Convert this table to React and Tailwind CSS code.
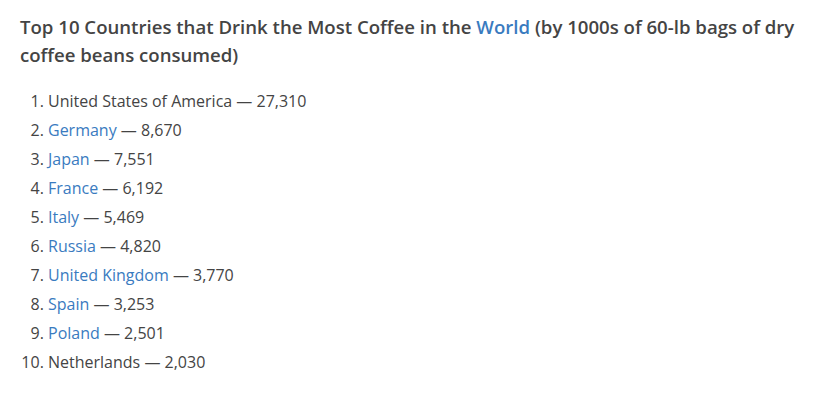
const countries = [
  { name: 'United States of America', value: '27,310', link: false },
  { name: 'Germany', value: '8,670', link: true },
  { name: 'Japan', value: '7,551', link: true },
  { name: 'France', value: '6,192', link: true },
  { name: 'Italy', value: '5,469', link: true },
  { name: 'Russia', value: '4,820', link: true },
  { name: 'United Kingdom', value: '3,770', link: true },
  { name: 'Spain', value: '3,253', link: true },
  { name: 'Poland', value: '2,501', link: true },
  { name: 'Netherlands', value: '2,030', link: false },
];

const App = () => {
  return (
    <div className="w-[829px] h-[402px] bg-white text-[#444] font-['Open_Sans',sans-serif] pt-[13px] px-[20px]">
      <h2 className="text-[18.6px] leading-[28px] font-semibold text-[#444]">
        Top 10 Countries that Drink the Most Coffee in the{' '}
        <a href="#" className="text-[#3a7bbf]">World</a> (by 1000s of 60-lb bags of dry coffee beans consumed)
      </h2>
      <ol className="list-decimal mt-[18px] pl-[28px] text-[16px] leading-[29px]">
        {countries.map(({ name, value, link }) => (
          <li key={name}>
            {link ? <a href="#" className="text-[#3a7bbf]">{name}</a> : name} — {value}
          </li>
        ))}
      </ol>
    </div>
  );
};

export default App;
